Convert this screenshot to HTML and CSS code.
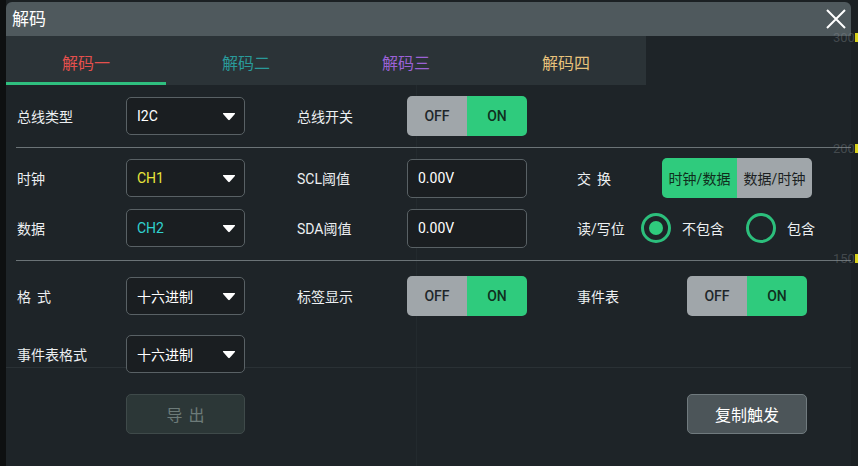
FILE: index.html
```html
<!DOCTYPE html>
<html lang="zh">
<head>
<meta charset="utf-8">
<title>解码</title>
<link rel="stylesheet" href="styles.css">
</head>
<body>
<div class="screen">
  <div class="dialog">
    <div class="titlebar">
      <span class="title">解码</span>
      <svg class="close" width="20" height="20" viewBox="0 0 20 20"><path d="M1 1 L19 19 M19 1 L1 19" stroke="#ffffff" stroke-width="2" fill="none"/></svg>
    </div>
    <div class="tabs-row">
      <div class="tabs">
        <div class="tab active t1">解码一</div>
        <div class="tab t2">解码二</div>
        <div class="tab t3">解码三</div>
        <div class="tab t4">解码四</div>
      </div>
    </div>

    <div class="section s1">
      <div class="row">
        <div class="label">总线类型</div>
        <div class="cell"><div class="select"><span>I2C</span><svg class="caret" width="14" height="9" viewBox="0 0 14 9"><path d="M1.5 1 H12.5 Q13.6 1 12.9 2 L7.8 7.8 Q7 8.6 6.2 7.8 L1.1 2 Q0.4 1 1.5 1 Z" fill="#ffffff"/></svg></div></div>
        <div class="label">总线开关</div>
        <div class="cell"><div class="toggle"><span class="off">OFF</span><span class="on">ON</span></div></div>
      </div>
    </div>
    <div class="sep"></div>

    <div class="section s2">
      <div class="row">
        <div class="label">时钟</div>
        <div class="cell"><div class="select"><span class="ch1">CH1</span><svg class="caret" width="14" height="9" viewBox="0 0 14 9"><path d="M1.5 1 H12.5 Q13.6 1 12.9 2 L7.8 7.8 Q7 8.6 6.2 7.8 L1.1 2 Q0.4 1 1.5 1 Z" fill="#ffffff"/></svg></div></div>
        <div class="label">SCL阈值</div>
        <div class="cell"><div class="input">0.00V</div></div>
        <div class="group">
          <div class="label w85"><span class="spaced">交换</span></div>
          <div class="segment"><span class="seg-on">时钟/数据</span><span class="seg-off">数据/时钟</span></div>
        </div>
      </div>
      <div class="row">
        <div class="label">数据</div>
        <div class="cell"><div class="select"><span class="ch2">CH2</span><svg class="caret" width="14" height="9" viewBox="0 0 14 9"><path d="M1.5 1 H12.5 Q13.6 1 12.9 2 L7.8 7.8 Q7 8.6 6.2 7.8 L1.1 2 Q0.4 1 1.5 1 Z" fill="#ffffff"/></svg></div></div>
        <div class="label">SDA阈值</div>
        <div class="cell"><div class="input">0.00V</div></div>
        <div class="group">
          <div class="label w64">读/写位</div>
          <div class="radio checked"><span class="dot"></span></div>
          <span class="radio-text">不包含</span>
          <div class="radio second"></div>
          <span class="radio-text">包含</span>
        </div>
      </div>
    </div>
    <div class="sep"></div>

    <div class="section s3">
      <div class="row">
        <div class="label"><span class="spaced">格式</span></div>
        <div class="cell"><div class="select"><span>十六进制</span><svg class="caret" width="14" height="9" viewBox="0 0 14 9"><path d="M1.5 1 H12.5 Q13.6 1 12.9 2 L7.8 7.8 Q7 8.6 6.2 7.8 L1.1 2 Q0.4 1 1.5 1 Z" fill="#ffffff"/></svg></div></div>
        <div class="label">标签显示</div>
        <div class="cell"><div class="toggle"><span class="off">OFF</span><span class="on">ON</span></div></div>
        <div class="group">
          <div class="label w110">事件表</div>
          <div class="toggle"><span class="off">OFF</span><span class="on">ON</span></div>
        </div>
      </div>
      <div class="row">
        <div class="label">事件表格式</div>
        <div class="cell"><div class="select"><span>十六进制</span><svg class="caret" width="14" height="9" viewBox="0 0 14 9"><path d="M1.5 1 H12.5 Q13.6 1 12.9 2 L7.8 7.8 Q7 8.6 6.2 7.8 L1.1 2 Q0.4 1 1.5 1 Z" fill="#ffffff"/></svg></div></div>
      </div>
      <div class="row">
        <div class="label"></div>
        <div class="cell"><div class="btn disabled">导出</div></div>
        <div class="label"></div>
        <div class="cell"></div>
        <div class="group">
          <div class="label w110"></div>
          <div class="btn primary">复制触发</div>
        </div>
      </div>
    </div>
  </div>

  <div class="scale sc300">300</div>
  <div class="scale sc200">200</div>
  <div class="scale sc150">150</div>
  <div class="marker m1"></div>
  <div class="marker m2"></div>
  <div class="marker m3"></div>
</div>
</body>
</html>
```

FILE: styles.css
```css
html, body {
  margin: 0;
  padding: 0;
}
body {
  width: 858px;
  height: 466px;
  overflow: hidden;
  background: #0f1112;
  font-family: Roboto, "Noto Sans CJK SC", sans-serif;
  color: #e9edef;
}
.screen {
  position: relative;
  width: 858px;
  height: 466px;
  box-sizing: border-box;
  padding: 2px 7px 0 6px;
  background: linear-gradient(to right, #0e1011 0, #0e1011 6px, #1b2023 6px);
}
.dialog {
  width: 845px;
  height: 464px;
  border-radius: 6px 6px 0 0;
  overflow: hidden;
  display: flex;
  flex-direction: column;
  background-color: #1e2428;
  background-image:
    linear-gradient(to bottom, transparent 365px, #2a3135 365px, #2a3135 366px, transparent 366px),
    linear-gradient(to right, transparent 410px, #232a2e 410px, #232a2e 411px, transparent 411px);
}
.titlebar {
  height: 34px;
  flex: none;
  background: #4f595d;
  display: flex;
  align-items: center;
  justify-content: space-between;
  padding: 0 5px 0 6px;
}
.title {
  font-size: 17px;
  color: #ffffff;
  line-height: 1;
}
.close {
  display: block;
}
.tabs-row {
  height: 49px;
  flex: none;
  display: flex;
}
.tabs {
  width: 640px;
  display: flex;
  background: #2b3337;
}
.tab {
  width: 160px;
  display: flex;
  align-items: center;
  justify-content: center;
  font-size: 16px;
  padding-top: 2px;
  box-sizing: border-box;
}
.tab.active {
  box-shadow: inset 0 -3px 0 #2fbf7f;
}
.t1 { color: #e4504d; }
.t2 { color: #2a9a9a; }
.t3 { color: #9b62d6; }
.t4 { color: #e7c27b; }

.section {
  padding-left: 11px;
  display: flex;
  flex-direction: column;
}
.s1 { padding-top: 11px; padding-bottom: 11px; }
.s2 { padding-top: 10px; padding-bottom: 12px; gap: 10px; }
.s3 { padding-top: 15px; }
.s3 .row + .row { margin-top: 18px; }
.s3 .row + .row + .row { margin-top: 20px; }

.sep {
  height: 1px;
  flex: none;
  margin-left: 10px;
  background: #6b7377;
}
.row {
  height: 40px;
  display: grid;
  grid-template-columns: 109px 171px 110px 170px 1fr;
  align-items: center;
}
.label {
  font-size: 14px;
  color: #eceff1;
  white-space: nowrap;
}
.spaced {
  letter-spacing: 6px;
}
.group {
  display: flex;
  align-items: center;
}
.w85 { width: 85px; }
.w64 { width: 64px; }
.w110 { width: 110px; }

.select {
  width: 119px;
  height: 38px;
  box-sizing: border-box;
  border: 1px solid #596165;
  border-radius: 5px;
  background: #1a1e21;
  display: flex;
  align-items: center;
  justify-content: space-between;
  padding: 0 8px 0 10px;
  font-size: 14px;
  color: #ffffff;
}
.caret { display: block; }
.ch1 { color: #e8e63a; }
.ch2 { color: #30d2d0; }

.input {
  width: 120px;
  height: 39px;
  box-sizing: border-box;
  border: 1px solid #596165;
  border-radius: 5px;
  background: #1a1e21;
  display: flex;
  align-items: center;
  padding-left: 10px;
  font-size: 14px;
  color: #ffffff;
}

.toggle {
  width: 120px;
  height: 40px;
  border-radius: 5px;
  overflow: hidden;
  display: flex;
  font-size: 14px;
  font-weight: 500;
}
.toggle span {
  flex: 1;
  display: flex;
  align-items: center;
  justify-content: center;
}
.toggle .off { background: #a0a6aa; color: #20262a; }
.toggle .on { background: #2fcb7d; color: #10301e; }

.segment {
  width: 150px;
  height: 40px;
  border-radius: 5px;
  overflow: hidden;
  display: flex;
  font-size: 14px;
}
.segment span {
  flex: 1;
  display: flex;
  align-items: center;
  justify-content: center;
}
.seg-on { background: #2fcb7d; color: #0f2e1c; }
.seg-off { background: #a0a6aa; color: #1b1f22; }

.radio {
  width: 30px;
  height: 30px;
  box-sizing: border-box;
  border: 3px solid #2cbf7c;
  border-radius: 50%;
  display: flex;
  align-items: center;
  justify-content: center;
  flex: none;
}
.radio .dot {
  width: 14px;
  height: 14px;
  border-radius: 50%;
  background: #2fcb7d;
}
.radio-text {
  font-size: 14px;
  color: #eceff1;
  margin-left: 11px;
  width: 42px;
}
.radio.second {
  margin-left: 22px;
}

.btn {
  height: 40px;
  box-sizing: border-box;
  border-radius: 5px;
  display: flex;
  align-items: center;
  justify-content: center;
  font-size: 16px;
}
.btn.disabled {
  width: 119px;
  background: #2c3737;
  border: 1px solid #3f4a4a;
  color: #6d7b79;
  letter-spacing: 6px;
  padding-left: 6px;
}
.btn.primary {
  width: 120px;
  background: #4c5559;
  border: 1px solid #707a7e;
  color: #ffffff;
}

.scale {
  position: absolute;
  left: 833px;
  font-size: 13px;
  color: rgba(140, 146, 150, 0.35);
  line-height: 1;
}
.sc300 { top: 31px; }
.sc200 { top: 142px; }
.sc150 { top: 252px; }
.marker {
  position: absolute;
  left: 855px;
  width: 3px;
  height: 9px;
  background: #d8d21e;
}
.m1 { top: 33px; }
.m2 { top: 144px; }
.m3 { top: 254px; }
```
